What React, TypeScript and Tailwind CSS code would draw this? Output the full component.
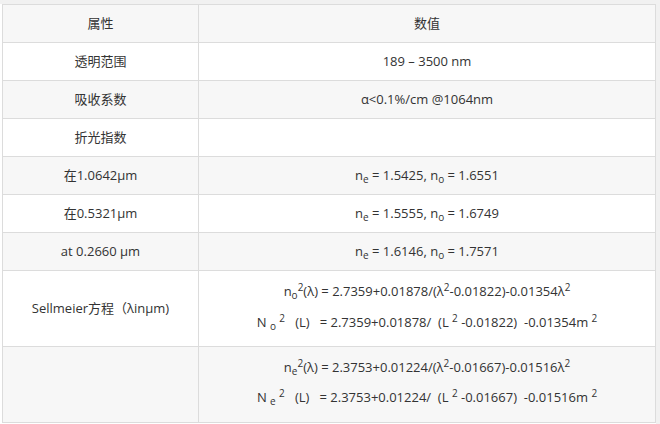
const font = { fontFamily: '"Open Sans", "Noto Sans CJK SC", sans-serif' };

const Sub = ({ children }: { children: React.ReactNode }) => (
  <sub className="static align-[-3px] text-[10px] leading-none">{children}</sub>
);
const Sup = ({ children }: { children: React.ReactNode }) => (
  <sup className="static align-[5px] text-[10px] leading-none">{children}</sup>
);

const simpleRows = [
  { k: "透明范围", v: <>189 – 3500 nm</> },
  { k: "吸收系数", v: <>α&lt;0.1%/cm @1064nm</> },
  { k: "折光指数", v: null },
  {
    k: "在1.0642μm",
    v: (
      <>
        n<Sub>e</Sub> = 1.5425, n<Sub>o</Sub> = 1.6551
      </>
    ),
  },
  {
    k: "在0.5321μm",
    v: (
      <>
        n<Sub>e</Sub> = 1.5555, n<Sub>o</Sub> = 1.6749
      </>
    ),
  },
  {
    k: "at 0.2660 μm",
    v: (
      <>
        n<Sub>e</Sub> = 1.6146, n<Sub>o</Sub> = 1.7571
      </>
    ),
  },
];

const cell = "border border-[#dcdcdc] text-center align-middle";

export default function App() {
  return (
    <div
      className="h-[424px] w-[660px] overflow-hidden border-t-4 border-r-4 border-[#f1f1f1] bg-white pl-[2px] text-[13px] text-[#333]"
      style={font}
    >
      <table className="w-[654px] border-collapse">
        <tbody>
          <tr className="h-[38px] bg-[#f7f7f7]">
            <td className={`${cell} w-[196px]`}>属性</td>
            <td className={cell}>数值</td>
          </tr>
          {simpleRows.map((r, i) => (
            <tr key={r.k} className={`h-[38px] ${i % 2 === 1 ? "bg-[#f7f7f7]" : "bg-white"}`}>
              <td className={cell}>{r.k}</td>
              <td className={cell}>{r.v}</td>
            </tr>
          ))}
          <tr className="h-[76px] bg-white">
            <td className={cell}>Sellmeier方程（λinμm)</td>
            <td className={cell}>
              <div className="flex flex-col items-center gap-[13px] pb-[5px]">
                <p className="leading-[18px]">
                  n<Sub>o</Sub>
                  <Sup>2</Sup>(λ) = 2.7359+0.01878/(λ<Sup>2</Sup>-0.01822)-0.01354λ<Sup>2</Sup>
                </p>
                <p className="leading-[18px]">
                  N <Sub>o</Sub> <Sup>2</Sup>&nbsp;&nbsp;&nbsp;(L)&nbsp;&nbsp;&nbsp;= 2.7359+0.01878/&nbsp;&nbsp;(L <Sup>2</Sup> -0.01822)&nbsp;&nbsp;-0.01354m <Sup>2</Sup>
                </p>
              </div>
            </td>
          </tr>
          <tr className="h-[76px] bg-[#f7f7f7]">
            <td className={cell}></td>
            <td className={cell}>
              <div className="flex flex-col items-center gap-[12px] pb-[6px]">
                <p className="leading-[18px]">
                  n<Sub>e</Sub>
                  <Sup>2</Sup>(λ) = 2.3753+0.01224/(λ<Sup>2</Sup>-0.01667)-0.01516λ<Sup>2</Sup>
                </p>
                <p className="leading-[18px]">
                  N <Sub>e</Sub> <Sup>2</Sup>&nbsp;&nbsp;&nbsp;(L)&nbsp;&nbsp;&nbsp;= 2.3753+0.01224/&nbsp;&nbsp;(L <Sup>2</Sup> -0.01667)&nbsp;&nbsp;-0.01516m <Sup>2</Sup>
                </p>
              </div>
            </td>
          </tr>
        </tbody>
      </table>
    </div>
  );
}
